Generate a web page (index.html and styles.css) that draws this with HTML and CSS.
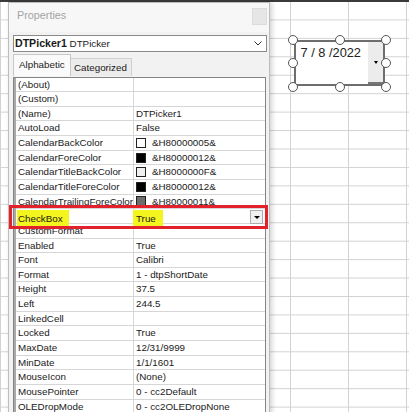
FILE: index.html
```html
<!DOCTYPE html>
<html>
<head>
<meta charset="utf-8">
<link rel="stylesheet" href="styles.css">
</head>
<body>
<div class="sheet">
  <div class="topline"></div>
  <div class="win">
    <div class="titlebar">
      <span class="title">Properties</span>
      <span class="close"></span>
    </div>
    <div class="combo">
      <span class="combo-text"><b>DTPicker1</b> DTPicker</span>
      <svg class="chev" width="8" height="5" viewBox="0 0 8 5"><path d="M0.5 0.5 L4 4 L7.5 0.5" fill="none" stroke="#333" stroke-width="1"/></svg>
    </div>
    <div class="tabs">
      <div class="tab active">Alphabetic</div>
      <div class="tab">Categorized</div>
    </div>
    <div class="grid">
      <div class="row"><div class="k">(About)</div><div class="v"></div></div>
      <div class="row"><div class="k">(Custom)</div><div class="v"></div></div>
      <div class="row"><div class="k">(Name)</div><div class="v">DTPicker1</div></div>
      <div class="row"><div class="k">AutoLoad</div><div class="v">False</div></div>
      <div class="row"><div class="k">CalendarBackColor</div><div class="v"><span class="sw sw-white"></span>&amp;H80000005&amp;</div></div>
      <div class="row"><div class="k">CalendarForeColor</div><div class="v"><span class="sw sw-black"></span>&amp;H80000012&amp;</div></div>
      <div class="row"><div class="k">CalendarTitleBackColor</div><div class="v"><span class="sw sw-light"></span>&amp;H8000000F&amp;</div></div>
      <div class="row"><div class="k">CalendarTitleForeColor</div><div class="v"><span class="sw sw-black"></span>&amp;H80000012&amp;</div></div>
      <div class="row"><div class="k">CalendarTrailingForeColor</div><div class="v"><span class="sw sw-grey"></span>&amp;H80000011&amp;</div></div>
      <div class="row sel"><div class="k"><span class="hl hl-k">CheckBox</span></div><div class="v"><span class="hl hl-v">True</span><span class="dd"><span class="tri"></span></span></div></div>
      <div class="row"><div class="k">CustomFormat</div><div class="v"></div></div>
      <div class="row"><div class="k">Enabled</div><div class="v">True</div></div>
      <div class="row"><div class="k">Font</div><div class="v">Calibri</div></div>
      <div class="row"><div class="k">Format</div><div class="v">1 - dtpShortDate</div></div>
      <div class="row"><div class="k">Height</div><div class="v">37.5</div></div>
      <div class="row"><div class="k">Left</div><div class="v">244.5</div></div>
      <div class="row"><div class="k">LinkedCell</div><div class="v"></div></div>
      <div class="row"><div class="k">Locked</div><div class="v">True</div></div>
      <div class="row"><div class="k">MaxDate</div><div class="v">12/31/9999</div></div>
      <div class="row"><div class="k">MinDate</div><div class="v">1/1/1601</div></div>
      <div class="row"><div class="k">MouseIcon</div><div class="v">(None)</div></div>
      <div class="row"><div class="k">MousePointer</div><div class="v">0 - cc2Default</div></div>
      <div class="row"><div class="k">OLEDropMode</div><div class="v">0 - cc2OLEDropNone</div></div>
    </div>
  </div>
  <div class="redbox"></div>
  <div class="dtp">
    <div class="dtp-text">7 / 8 /2022</div>
    <div class="dtp-drop"><span class="tri"></span></div>
    <span class="h h1"></span><span class="h h2"></span><span class="h h3"></span>
    <span class="h h4"></span><span class="h h5"></span>
    <span class="h h6"></span><span class="h h7"></span><span class="h h8"></span>
  </div>
</div>
</body>
</html>
```
FILE: styles.css
```css
* { box-sizing: border-box; }
html, body { margin: 0; padding: 0; }
body {
  width: 409px;
  height: 412px;
  overflow: hidden;
  background: #fff;
  font-family: "Liberation Sans", Arial, sans-serif;
  color: #1a1a1a;
}
.sheet {
  position: relative;
  width: 409px;
  height: 412px;
  overflow: hidden;
  background-color: #fff;
  background-image:
    linear-gradient(to bottom, #d2d2d2 1px, transparent 1px),
    linear-gradient(to right, #d2d2d2 1px, transparent 1px);
  background-size: 100% 18.45px, 58px 100%;
  background-position: 0 1px, 290px 0;
}
.topline { height: 2px; background: #3a3a3a; }

.win {
  margin-left: 8px;
  width: 262px;
  height: 420px;
  background: #f2f2f2;
  border: 1px solid #bdbdbd;
  box-shadow: 2px 0 5px rgba(0, 0, 0, 0.18);
  display: flex;
  flex-direction: column;
}
.titlebar {
  height: 29px;
  flex: none;
  display: flex;
  align-items: flex-start;
  justify-content: space-between;
  padding: 5px 2px 0 8px;
  background: #f7f7f7;
}
.title {
  font-size: 10.8px;
  line-height: 14px;
  color: #a3a3a3;
}
.close {
  width: 15px;
  height: 17px;
  background: #e6e6e6;
  border: 1px solid #dcdcdc;
}
.combo {
  flex: none;
  margin: 3px 0 0 4px;
  width: 254px;
  height: 17px;
  border: 1px solid #8a8a8a;
  background: #fff;
  display: flex;
  align-items: center;
  justify-content: space-between;
  padding: 0 4px 0 1px;
}
.combo-text { font-size: 9.8px; line-height: 14px; white-space: nowrap; }
.combo-text b { font-size: 10.6px; }
.chev { display: block; }

.tabs {
  flex: none;
  margin: 1px 0 0 4px;
  height: 23px;
  display: flex;
  align-items: flex-end;
}
.tab {
  font-size: 9.8px;
  line-height: 11px;
  white-space: nowrap;
}
.tab.active {
  width: 58px;
  height: 22px;
  padding: 4px 0 0 5px;
  background: #fafafa;
  border: 1px solid #c8c8c8;
  border-bottom: none;
}
.tab:not(.active) {
  width: 61px;
  height: 18px;
  padding: 2.5px 0 0 3px;
  background: #ececec;
  border: 1px solid #d0d0d0;
  border-left: none;
  border-bottom: none;
}

.grid {
  flex: none;
  margin: 0.5px 0 0 4px;
  width: 253px;
  background: #fff;
  border: 1px solid #858585;
  border-bottom: none;
  padding-left: 2px;
  box-shadow: inset 2px 0 0 #a9a9a9;
}
.row {
  display: grid;
  grid-template-columns: 118px 1fr;
  height: 14.65px;
  border-bottom: 1px solid #d6d6d6;
  font-size: 9.8px;
  line-height: 13.65px;
}
.k {
  padding-left: 2px;
  border-right: 1px solid #d6d6d6;
  white-space: nowrap;
  overflow: hidden;
}
.v {
  padding-left: 2px;
  white-space: nowrap;
  display: flex;
  align-items: center;
}
.sw {
  display: inline-block;
  width: 10px;
  height: 10px;
  border: 1px solid #222;
  margin-right: 6px;
  flex: none;
}
.sw-white { background: #fff; }
.sw-black { background: #000; }
.sw-light { background: #f0f0f0; }
.sw-grey { background: #6d6d6d; }

.row.sel .k { overflow: visible; }
.hl { background: #f4f41e; }
.hl-k {
  display: inline-block;
  margin-left: -1px;
  padding: 1px 6px 0 1px;
  height: 16px;
  line-height: 15px;
  position: relative;
  top: 0.5px;
}
.hl-v {
  display: inline-block;
  margin-left: -3px;
  padding: 1px 0 0 3px;
  width: 30px;
  height: 16px;
  line-height: 15px;
  position: relative;
  top: 1px;
}
.dd {
  margin-left: auto;
  margin-right: 2px;
  width: 13px;
  height: 14px;
  background: #f0f0f0;
  border: 1px solid #adadad;
  display: flex;
  align-items: center;
  justify-content: center;
}
.tri {
  width: 0;
  height: 0;
  border-left: 3px solid transparent;
  border-right: 3px solid transparent;
  border-top: 3px solid #000;
}

.redbox {
  position: absolute;
  left: 9px;
  top: 204.5px;
  width: 259px;
  height: 24.2px;
  border: 3px solid #e3212d;
}

.dtp {
  position: absolute;
  left: 294px;
  top: 40px;
  width: 91px;
  height: 46px;
  border: 2px solid #6e6e6e;
  background: #fff;
  display: flex;
}
.dtp-text {
  flex: 1;
  font-size: 12.8px;
  line-height: 15px;
  padding: 3.3px 0 0 4.5px;
  color: #222;
  white-space: nowrap;
}
.dtp-drop {
  width: 15px;
  background: #ececec;
  border-bottom: 2px solid #777;
  display: flex;
  align-items: center;
  justify-content: center;
}
.dtp-drop .tri {
  border-left-width: 2.5px;
  border-right-width: 2.5px;
}
.h {
  position: absolute;
  width: 10px;
  height: 10px;
  border-radius: 50%;
  background: #fff;
  border: 1.5px solid #555;
}
.h1 { left: -7.7px; top: -7px; }
.h2 { left: 39px; top: -7px; }
.h3 { left: 84.7px; top: -7px; }
.h4 { left: -7.7px; top: 16.3px; }
.h5 { left: 84.7px; top: 16.3px; }
.h6 { left: -7.7px; top: 40.3px; }
.h7 { left: 39px; top: 40.3px; }
.h8 { left: 84.7px; top: 40.3px; }
```
